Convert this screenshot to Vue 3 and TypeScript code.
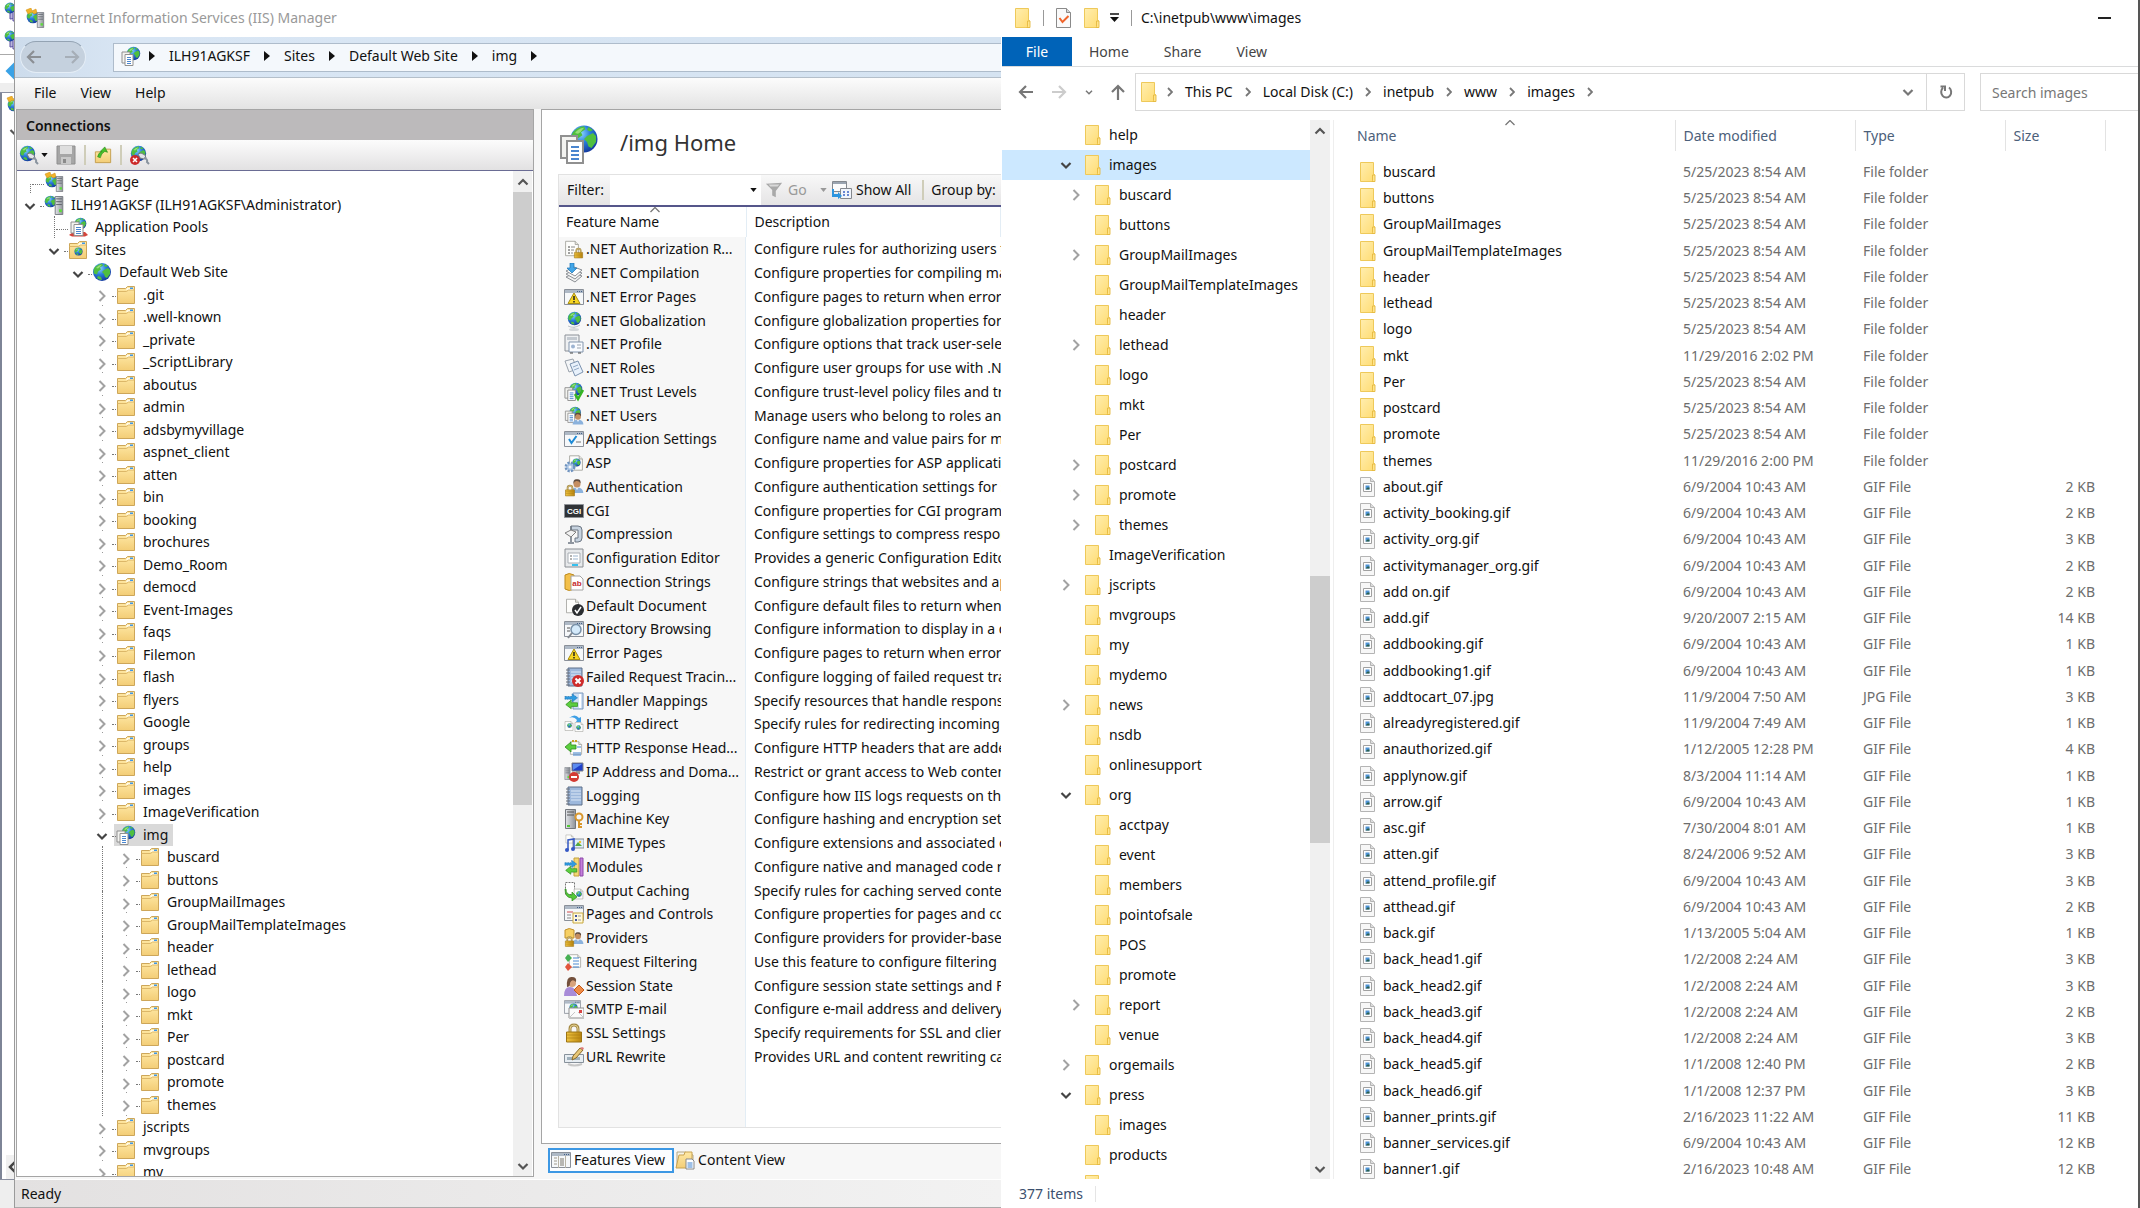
<script setup lang="ts">
interface TreeNode {
  label: string
  icon: string
  depth: number
  toggle: 'open' | 'closed' | 'none'
  selected?: boolean
}

const closed = (label: string, depth: number): TreeNode => ({ label, icon: 'folder', depth, toggle: 'closed' })

const siteFoldersBefore = ['.git', '.well-known', '_private', '_ScriptLibrary', 'aboutus', 'admin', 'adsbymyvillage', 'aspnet_client', 'atten', 'bin', 'booking', 'brochures', 'Demo_Room', 'democd', 'Event-Images', 'faqs', 'Filemon', 'flash', 'flyers', 'Google', 'groups', 'help', 'images', 'ImageVerification']
const imgFolders = ['buscard', 'buttons', 'GroupMailImages', 'GroupMailTemplateImages', 'header', 'lethead', 'logo', 'mkt', 'Per', 'postcard', 'promote', 'themes']
const siteFoldersAfter = ['jscripts', 'mvgroups', 'my']

const connections: TreeNode[] = [
  { label: 'Start Page', icon: 'start', depth: 0, toggle: 'none' },
  { label: 'ILH91AGKSF (ILH91AGKSF\\Administrator)', icon: 'server', depth: 0, toggle: 'open' },
  { label: 'Application Pools', icon: 'pools', depth: 1, toggle: 'none' },
  { label: 'Sites', icon: 'sites', depth: 1, toggle: 'open' },
  { label: 'Default Web Site', icon: 'globe', depth: 2, toggle: 'open' },
  ...siteFoldersBefore.map((n) => closed(n, 3)),
  { label: 'img', icon: 'app', depth: 3, toggle: 'open', selected: true },
  ...imgFolders.map((n) => closed(n, 4)),
  ...siteFoldersAfter.map((n) => closed(n, 3)),
]

const iisPath = ['ILH91AGKSF', 'Sites', 'Default Web Site', 'img']
const iisMenu = ['File', 'View', 'Help']

const features: [string, string, string][] = [
  ['authrules', '.NET Authorization R...', 'Configure rules for authorizing users to access Web sites'],
  ['compile', '.NET Compilation', 'Configure properties for compiling managed code'],
  ['error', '.NET Error Pages', 'Configure pages to return when errors occur'],
  ['global', '.NET Globalization', 'Configure globalization properties for managed code'],
  ['profile', '.NET Profile', 'Configure options that track user-selected preferences'],
  ['roles', '.NET Roles', 'Configure user groups for use with .NET Users'],
  ['trust', '.NET Trust Levels', 'Configure trust-level policy files and trust levels'],
  ['users', '.NET Users', 'Manage users who belong to roles and use the site'],
  ['appset', 'Application Settings', 'Configure name and value pairs for managed code'],
  ['asp', 'ASP', 'Configure properties for ASP applications'],
  ['authn', 'Authentication', 'Configure authentication settings for sites'],
  ['cgi', 'CGI', 'Configure properties for CGI programs'],
  ['compress', 'Compression', 'Configure settings to compress responses'],
  ['config', 'Configuration Editor', 'Provides a generic Configuration Editor'],
  ['connstr', 'Connection Strings', 'Configure strings that websites and applications use'],
  ['defdoc', 'Default Document', 'Configure default files to return when clients ask'],
  ['browse', 'Directory Browsing', 'Configure information to display in a directory listing'],
  ['error', 'Error Pages', 'Configure pages to return when errors occur'],
  ['failed', 'Failed Request Tracin...', 'Configure logging of failed request traces'],
  ['handler', 'Handler Mappings', 'Specify resources that handle responses'],
  ['redirect', 'HTTP Redirect', 'Specify rules for redirecting incoming requests'],
  ['response', 'HTTP Response Head...', 'Configure HTTP headers that are added to responses'],
  ['ip', 'IP Address and Doma...', 'Restrict or grant access to Web content'],
  ['logging', 'Logging', 'Configure how IIS logs requests on the Web server'],
  ['key', 'Machine Key', 'Configure hashing and encryption settings'],
  ['mime', 'MIME Types', 'Configure extensions and associated content types'],
  ['modules', 'Modules', 'Configure native and managed code modules'],
  ['output', 'Output Caching', 'Specify rules for caching served content'],
  ['pages', 'Pages and Controls', 'Configure properties for pages and controls'],
  ['providers', 'Providers', 'Configure providers for provider-based features'],
  ['reqfilter', 'Request Filtering', 'Use this feature to configure filtering rules'],
  ['session', 'Session State', 'Configure session state settings and Forms cookies'],
  ['smtp', 'SMTP E-mail', 'Configure e-mail address and delivery options'],
  ['ssl', 'SSL Settings', 'Specify requirements for SSL and client certificates'],
  ['rewrite', 'URL Rewrite', 'Provides URL and content rewriting capabilities'],
]

// Short captions that sit inside a feature's icon
const captions: Record<string, { text: string; x: number; y: number; fill: string }> = {
  cgi: { text: 'CGI', x: 10, y: 13, fill: '#fff' },
  connstr: { text: 'ab', x: 13, y: 14, fill: '#c62b2b' },
}

type NavRow = [string, number, '' | 'open' | 'closed']
const navRows: NavRow[] = [
  ['help', 0, ''], ['images', 0, 'open'], ['buscard', 1, 'closed'], ['buttons', 1, ''], ['GroupMailImages', 1, 'closed'],
  ['GroupMailTemplateImages', 1, ''], ['header', 1, ''], ['lethead', 1, 'closed'], ['logo', 1, ''], ['mkt', 1, ''], ['Per', 1, ''],
  ['postcard', 1, 'closed'], ['promote', 1, 'closed'], ['themes', 1, 'closed'], ['ImageVerification', 0, ''], ['jscripts', 0, 'closed'],
  ['mvgroups', 0, ''], ['my', 0, ''], ['mydemo', 0, ''], ['news', 0, 'closed'], ['nsdb', 0, ''], ['onlinesupport', 0, ''],
  ['org', 0, 'open'], ['acctpay', 1, ''], ['event', 1, ''], ['members', 1, ''], ['pointofsale', 1, ''], ['POS', 1, ''],
  ['promote', 1, ''], ['report', 1, 'closed'], ['venue', 1, ''], ['orgemails', 0, 'closed'], ['press', 0, 'open'],
  ['images', 1, ''], ['products', 0, ''], ['', 0, ''],
]

const explorerTabs = ['Home', 'Share', 'View']
const explorerPath = ['This PC', 'Local Disk (C:)', 'inetpub', 'www', 'images']

const dir = 'File folder'
const gif = 'GIF File'
const files: [string, string, string, string][] = [
  ['buscard', '5/25/2023 8:54 AM', dir, ''], ['buttons', '5/25/2023 8:54 AM', dir, ''],
  ['GroupMailImages', '5/25/2023 8:54 AM', dir, ''], ['GroupMailTemplateImages', '5/25/2023 8:54 AM', dir, ''],
  ['header', '5/25/2023 8:54 AM', dir, ''], ['lethead', '5/25/2023 8:54 AM', dir, ''],
  ['logo', '5/25/2023 8:54 AM', dir, ''], ['mkt', '11/29/2016 2:02 PM', dir, ''],
  ['Per', '5/25/2023 8:54 AM', dir, ''], ['postcard', '5/25/2023 8:54 AM', dir, ''],
  ['promote', '5/25/2023 8:54 AM', dir, ''], ['themes', '11/29/2016 2:00 PM', dir, ''],
  ['about.gif', '6/9/2004 10:43 AM', gif, '2 KB'], ['activity_booking.gif', '6/9/2004 10:43 AM', gif, '2 KB'],
  ['activity_org.gif', '6/9/2004 10:43 AM', gif, '3 KB'], ['activitymanager_org.gif', '6/9/2004 10:43 AM', gif, '2 KB'],
  ['add on.gif', '6/9/2004 10:43 AM', gif, '2 KB'], ['add.gif', '9/20/2007 2:15 AM', gif, '14 KB'],
  ['addbooking.gif', '6/9/2004 10:43 AM', gif, '1 KB'], ['addbooking1.gif', '6/9/2004 10:43 AM', gif, '1 KB'],
  ['addtocart_07.jpg', '11/9/2004 7:50 AM', 'JPG File', '3 KB'], ['alreadyregistered.gif', '11/9/2004 7:49 AM', gif, '1 KB'],
  ['anauthorized.gif', '1/12/2005 12:28 PM', gif, '4 KB'], ['applynow.gif', '8/3/2004 11:14 AM', gif, '1 KB'],
  ['arrow.gif', '6/9/2004 10:43 AM', gif, '1 KB'], ['asc.gif', '7/30/2004 8:01 AM', gif, '1 KB'],
  ['atten.gif', '8/24/2006 9:52 AM', gif, '3 KB'], ['attend_profile.gif', '6/9/2004 10:43 AM', gif, '3 KB'],
  ['atthead.gif', '6/9/2004 10:43 AM', gif, '2 KB'], ['back.gif', '1/13/2005 5:04 AM', gif, '1 KB'],
  ['back_head1.gif', '1/2/2008 2:24 AM', gif, '3 KB'], ['back_head2.gif', '1/2/2008 2:24 AM', gif, '3 KB'],
  ['back_head3.gif', '1/2/2008 2:24 AM', gif, '2 KB'], ['back_head4.gif', '1/2/2008 2:24 AM', gif, '3 KB'],
  ['back_head5.gif', '1/1/2008 12:40 PM', gif, '2 KB'], ['back_head6.gif', '1/1/2008 12:37 PM', gif, '3 KB'],
  ['banner_prints.gif', '2/16/2023 11:22 AM', gif, '11 KB'], ['banner_services.gif', '6/9/2004 10:43 AM', gif, '12 KB'],
  ['banner1.gif', '2/16/2023 10:48 AM', gif, '12 KB'],
]
</script>

<template>
  <svg class="sprite" aria-hidden="true">
    <defs>
      <radialGradient id="g-sea" cx="38%" cy="30%" r="75%"><stop offset="0" stop-color="#8fd8ff" /><stop offset=".45" stop-color="#2a7fdb" /><stop offset="1" stop-color="#12359a" /></radialGradient>
      <linearGradient id="g-folder" x1="0" y1="0" x2="0" y2="1"><stop offset="0" stop-color="#ffe9a6" /><stop offset="1" stop-color="#f3cd76" /></linearGradient>
      <linearGradient id="g-xfolder" x1="0" y1="0" x2="1" y2="1"><stop offset="0" stop-color="#ffeeb0" /><stop offset="1" stop-color="#ffdc72" /></linearGradient>
      <linearGradient id="g-lock" x1="0" y1="0" x2="1" y2="0"><stop offset="0" stop-color="#f0c440" /><stop offset="1" stop-color="#b9850f" /></linearGradient>
      <linearGradient id="g-steel" x1="0" y1="0" x2="1" y2="0"><stop offset="0" stop-color="#e4e6ea" /><stop offset="1" stop-color="#8e9299" /></linearGradient>
    </defs>

    <symbol id="i-globe" viewBox="0 0 20 20">
      <circle cx="10" cy="10" r="9" fill="url(#g-sea)" />
      <path d="M3 5q3-3 7-3.500l1 2-3 2 1 2-3 2-1 3-3-1q-1-4 1-6.500zM12 8l4-2 2 2v4l-3 4-2-1-1-3-2-2zM6 14l3 1 1 3q-3 0-5-2zM13 2l3 2-2 1-2-1z" fill="#4fbf3f" />
      <path d="M4 6q2-3 6-3.500-2 3-4 4z" fill="#c7f2a0" opacity=".6" />
    </symbol>
    <symbol id="i-page" viewBox="0 0 20 20">
      <path d="M2 1h12l4 4v14H2z" fill="#fdfdfb" stroke="#9a9a94" />
      <path d="M14 1v4h4" fill="#e6e6e0" stroke="#9a9a94" />
    </symbol>
    <symbol id="i-win" viewBox="0 0 20 20">
      <path d="M.5 2.500h19v15H.5z" fill="#f6f8fa" stroke="#8a9099" />
      <path d="M1 3h18v3H1z" fill="#aeb9c6" />
      <path d="M13 4.500h1M15 4.500h1M17 4.500h1" stroke="#42608a" />
    </symbol>
    <symbol id="i-person" viewBox="0 0 20 20">
      <path d="M1 20q0-8 9-8t9 8z" fill="#8bb2dd" />
      <path d="M7 11l3 5 3-5z" fill="#e9f0f8" />
      <circle cx="10" cy="7" r="5" fill="#c58e60" />
      <path d="M5 7q-1-7 5-6.500 6-.5 5 6-2-4-6-3.500-3 0-4 4z" fill="#5e4a3c" />
    </symbol>
    <symbol id="i-ssl" viewBox="0 0 20 20">
      <path d="M6 9V6q0-4 4-4t4 4v3" fill="none" stroke="#a58a45" stroke-width="3" />
      <path d="M6 9V6q0-4 4-4t4 4v3" fill="none" stroke="#e3cf8e" />
      <path d="M2.500 9h15v10h-15z" fill="url(#g-lock)" stroke="#9c7414" />
      <path d="M3 12h14M3 15h14" stroke="#a87b13" opacity=".6" />
    </symbol>
    <symbol id="i-tower" viewBox="0 0 10 20">
      <path d="M1 .500h8v19H1z" fill="url(#g-steel)" stroke="#777b82" />
      <path d="M2 3h6M2 6h6M2 9h6" stroke="#5d6269" />
      <path d="M5 14h3v3H5z" fill="#5edb3c" />
    </symbol>
    <symbol id="i-notebook" viewBox="0 0 20 20">
      <path d="M4 1h14v18H4z" fill="#9db8dc" stroke="#5d6e88" />
      <path d="M7 5h10M7 8h10M7 11h10M7 14h10" stroke="#dce8f6" />
      <path d="M2 3h4M2 6h4M2 9h4M2 12h4M2 15h4M2 18h4" stroke="#6a717c" />
    </symbol>
    <symbol id="i-arrows" viewBox="0 0 20 20">
      <path d="M1 5h8V2l6 4.500L9 11V8H1z" fill="#2f9be0" stroke="#1d6aa8" stroke-width=".7" stroke-dasharray="2 1" />
      <path d="M15 12H8V9l-6 5 6 4.500V16h7z" fill="#5ccf3e" stroke="#2e8a1e" stroke-width=".8" />
    </symbol>

    <symbol id="i-start" viewBox="0 0 20 20">
      <use href="#i-globe" x="1" y="2" width="14" height="14" />
      <path d="M1 2l5-2 1 3 4-2 1 4-3 1-2-2-4 2z" fill="#f2b32b" stroke="#d18d10" stroke-width=".5" />
      <use href="#i-tower" x="11" y="4" width="9" height="16" />
    </symbol>
    <symbol id="i-server" viewBox="0 0 20 20">
      <use href="#i-globe" x="0" y="0" width="13" height="13" />
      <use href="#i-tower" x="10" y="1" width="10" height="19" />
    </symbol>
    <symbol id="i-stack" viewBox="0 0 20 20">
      <path d="M6 7l8-1v10l-8 1z" fill="#b9b6dc" stroke="#5a4fa0" />
      <path d="M9 9l8-1v10l-8 1z" fill="#dcd9f2" stroke="#5a4fa0" />
      <use href="#i-globe" x="0" y="0" width="12" height="12" />
    </symbol>
    <symbol id="i-app" viewBox="0 0 20 20">
      <use href="#i-globe" x="5" y="0" width="15" height="15" />
      <path d="M1 6h8v11H1z" fill="#f3f3f0" stroke="#909090" />
      <path d="M4 8.500h8v11H4z" fill="#fff" stroke="#909090" />
      <path d="M6 11.500h4M6 13.500h4M6 15.500h4M6 17.500h4" stroke="#4a86cf" />
    </symbol>
    <symbol id="i-pools" viewBox="0 0 20 20">
      <use href="#i-globe" x="6" y="0" width="13" height="13" />
      <path d="M1 18l4-3h12l3 3-3 1.500H4z" fill="#d5453b" />
      <path d="M3 5h8v11H3z" fill="#f3f3f0" stroke="#909090" />
      <path d="M6 7.500h9v11H6z" fill="#fff" stroke="#909090" />
      <path d="M8 10.500h5M8 12.500h5M8 14.500h5M8 16.500h5" stroke="#4a86cf" />
    </symbol>
    <symbol id="i-folder" viewBox="0 0 20 20">
      <path d="M1.500 3.500h8l2-2h7v17h-17z" fill="url(#g-folder)" stroke="#cda659" />
      <path d="M11 3h6v2H10z" fill="#fffbe8" /><path d="M14 2.500h3v1.500h-3z" fill="#3f97e6" />
      <path d="M1.500 6.500h9l2-1.500h6" fill="none" stroke="#dcb768" />
    </symbol>
    <symbol id="i-sites" viewBox="0 0 20 20">
      <use href="#i-folder" width="20" height="20" /><use href="#i-globe" x="6" y="7" width="9" height="9" />
    </symbol>
    <symbol id="i-xfolder" viewBox="0 0 16 20">
      <path d="M.5 .500h13v12h1v7H.5z" fill="url(#g-xfolder)" stroke="#eec95a" />
      <path d="M12.500 18.500v-5.500h2.500v6.500h-3z" fill="#ffe48c" stroke="#e5b93f" stroke-width=".9" />
    </symbol>
    <symbol id="i-image" viewBox="0 0 16 20">
      <path d="M.5 .500h10l4 4v15H.5z" fill="#f7f7f7" stroke="#b4b4b4" />
      <path d="M10.500 .500v4h4" fill="#ddd" stroke="#b4b4b4" />
      <path d="M3.500 6.500h8v8h-8z" fill="#fff" stroke="#a0a0a0" />
      <path d="M5.500 8.500h4v4h-4z" fill="#4d93d6" /><path d="M5.500 12.500l2-2h2v2z" fill="#2c5f4c" />
    </symbol>
    <symbol id="i-plug" viewBox="0 0 20 20">
      <use href="#i-globe" width="17" height="17" />
      <path d="M8 9l3-1 4 2 1 3-2 1-4-1z" fill="#e1e4e8" stroke="#757b83" /><path d="M14 13q4 1 3 4l2 2" fill="none" stroke="#89939e" stroke-width="2" />
    </symbol>
    <symbol id="i-unplug" viewBox="0 0 20 20">
      <use href="#i-plug" width="20" height="20" />
      <circle cx="5" cy="15" r="5" fill="#cc2a2a" /><path d="M3 13l4 4M7 13l-4 4" stroke="#fff" stroke-width="1.500" />
    </symbol>
    <symbol id="i-save" viewBox="0 0 20 20">
      <path d="M1 1h18v18H1z" fill="#a6a6a6" stroke="#8e8e8e" /><path d="M4 1h12v8H4z" fill="#dedede" /><path d="M5 12h10v7H5z" fill="#c9c9c9" /><path d="M7 14h3v4H7z" fill="#8a8a8a" />
    </symbol>
    <symbol id="i-upfolder" viewBox="0 0 20 20">
      <path d="M1.500 6.500h9l2-3h6v15h-17z" fill="url(#g-folder)" stroke="#c19b4b" />
      <path d="M4 12q1-5 5-6H7l5-5 3 6-3-1q-4 2-5 7z" fill="#46c02b" stroke="#2c8a19" stroke-width=".7" />
    </symbol>
    <symbol id="i-funnel" viewBox="0 0 20 20">
      <path d="M1 3l18-1-7 9v7l-4-2v-6z" fill="#a9a9a9" /><path d="M4 4h12l-2 2H6z" fill="#d9d9d9" />
    </symbol>
    <symbol id="i-showall" viewBox="0 0 20 20">
      <path d="M.5 1.500h14v10H.5z" fill="#fbfbfb" stroke="#84888e" /><path d="M1 2h13v2H1z" fill="#9aa4b0" />
      <path d="M8.500 8.500h11v10h-11z" fill="#f0f4fb" stroke="#84888e" /><path d="M11 12h2M15 12h2M11 15h2M15 15h2" stroke="#3b62c4" stroke-width="1.500" />
      <path d="M2 9v5h4v-2l4 4-4 3v-2H0V9z" fill="#2d95df" />
    </symbol>
    <symbol id="i-featview" viewBox="0 0 20 20">
      <use href="#i-win" width="20" height="20" /><path d="M3 8h3M3 11h3M3 14h3" stroke="#a09a8c" /><path d="M7.500 6v12M14.500 6v12" stroke="#b9b4a6" /><path d="M9 9h4M9 11h4M9 13h4M9 15h4" stroke="#7b776d" />
    </symbol>
    <symbol id="i-contview" viewBox="0 0 20 20">
      <path d="M2 2h8l8 3v11H2z" fill="#f7f4ea" stroke="#b4a784" /><path d="M1 18L4 5h5l1-3h7v14l-5 2z" fill="url(#g-folder)" stroke="#c8a24f" />
      <path d="M11 9h6l2 2v8h-8z" fill="#fff" stroke="#888" /><path d="M12.500 13h5M12.500 15h5M12.500 17h5" stroke="#3f82d0" />
    </symbol>

    <symbol id="i-authrules" viewBox="0 0 20 20">
      <use href="#i-page" width="16" height="19" /><path d="M4 8h2M4 11h2M4 14h2" stroke="#444" /><path d="M7 8h4M7 11h3M7 14h2" stroke="#888" />
      <use href="#i-ssl" x="9" y="8" width="11" height="12" />
    </symbol>
    <symbol id="i-compile" viewBox="0 0 20 20">
      <path d="M2 14l8-4 8 3-7 6z" fill="#f2f2f2" stroke="#8b8f94" /><path d="M2 11l8-4 8 3-7 6z" fill="#f8f8f8" stroke="#8b8f94" /><path d="M2 8l8-4 8 3-7 6z" fill="#fff" stroke="#8b8f94" />
      <path d="M6 0h4v5h3l-5 5-5-5h3z" fill="#42a6e8" stroke="#1d74b4" stroke-width=".7" />
    </symbol>
    <symbol id="i-error" viewBox="0 0 20 20">
      <use href="#i-win" width="20" height="20" /><path d="M10 6l6 10.500H4z" fill="#f7d624" stroke="#a98e12" /><path d="M10 9v4M10 14v1.500" stroke="#222" stroke-width="1.500" />
    </symbol>
    <symbol id="i-global" viewBox="0 0 20 20">
      <use href="#i-globe" x="3" y="0" width="15" height="15" /><path d="M4 15q6 3 12-1M10 16v2" fill="none" stroke="#bfc4ca" /><ellipse cx="10" cy="18.500" rx="5" ry="1.500" fill="#d4d7da" />
    </symbol>
    <symbol id="i-profile" viewBox="0 0 20 20">
      <path d="M1 1h14v16H1z" fill="#eef0f2" stroke="#8b9097" /><path d="M3 3h10v3H3z" fill="#c3c9d0" /><path d="M5 8h14v10H5z" fill="#fafcff" stroke="#8295ad" />
      <circle cx="9" cy="12.500" r="2" fill="#9db4d2" /><path d="M13 11h4M13 14h4" stroke="#9aa3ae" /><path d="M6 19h3M14 19h3" stroke="#444" />
    </symbol>
    <symbol id="i-roles" viewBox="0 0 20 20">
      <path d="M1 3l8-2 4 10-8 3z" fill="#f3f5f7" stroke="#9aa2ac" /><path d="M6 6l8-3 5 11-8 4z" fill="#e8f1fb" stroke="#7c93b0" /><path d="M9 9l5-2M10 12l5-2" stroke="#8fa7c5" />
    </symbol>
    <symbol id="i-trust" viewBox="0 0 20 20">
      <use href="#i-app" width="19" height="19" /><path d="M11 12l3 5 5-9" fill="none" stroke="#35b522" stroke-width="2.500" />
    </symbol>
    <symbol id="i-users" viewBox="0 0 20 20">
      <use href="#i-app" width="18" height="17" /><use href="#i-person" x="8" y="5" width="12" height="15" />
    </symbol>
    <symbol id="i-appset" viewBox="0 0 20 20">
      <use href="#i-win" width="20" height="20" /><path d="M5 10l2.500 4 5-7" fill="none" stroke="#1e8bd6" stroke-width="2" /><path d="M12 13h5" stroke="#777" />
    </symbol>
    <symbol id="i-asp" viewBox="0 0 20 20">
      <use href="#i-page" x="4" width="16" height="20" /><use href="#i-globe" x="8" y="5" width="9" height="9" />
      <circle cx="6" cy="14" r="4" fill="#c6d8ee" stroke="#6f93bf" stroke-width="3" stroke-dasharray="2 1.200" /><circle cx="6" cy="14" r="3" fill="#a9c4e4" /><circle cx="6" cy="14" r="1.500" fill="#f7f7f7" />
    </symbol>
    <symbol id="i-authn" viewBox="0 0 20 20">
      <use href="#i-person" x="6" y="0" width="14" height="18" /><use href="#i-ssl" x="0" y="7" width="12" height="13" />
    </symbol>
    <symbol id="i-cgi" viewBox="0 0 20 20">
      <path d="M.5 3.500h19v13H.5z" fill="#2f3236" stroke="#8f9398" />
    </symbol>
    <symbol id="i-compress" viewBox="0 0 20 20">
      <path d="M7 2h7q4 0 4 4v8q0 4-4 4h-3v-4h3V6H7z" fill="#c7d3e0" stroke="#6d7783" /><path d="M1 9l6-3 5 2-5 5z" fill="#f3f3f3" stroke="#7d7d7d" /><path d="M7 13v5M4 19h6M7 2v4" stroke="#6d7783" stroke-width="1.500" />
    </symbol>
    <symbol id="i-config" viewBox="0 0 20 20">
      <path d="M1 1h18v18H1z" fill="#e7e9eb" stroke="#8a8e93" /><path d="M4 5h12v10H4z" fill="#fff" stroke="#a8adb3" /><path d="M6 8h2M6 11h2" stroke="#666" /><path d="M9 8h5M9 11h5" stroke="#9bb3cc" /><path d="M8 17h6" stroke="#36c0ee" stroke-width="2" />
    </symbol>
    <symbol id="i-connstr" viewBox="0 0 20 20">
      <path d="M1 3q4-3 9 0v14q-5 3-9 0z" fill="#f3c04a" stroke="#bd8a1c" /><path d="M7 4h9l3 3v11H7z" fill="#fff" stroke="#a4a4a4" />
    </symbol>
    <symbol id="i-defdoc" viewBox="0 0 20 20">
      <use href="#i-page" x="1" width="15" height="20" /><circle cx="14" cy="14" r="6" fill="#2b2d30" /><path d="M11 14l2 3 4-6" fill="none" stroke="#fff" stroke-width="1.500" />
    </symbol>
    <symbol id="i-browse" viewBox="0 0 20 20">
      <use href="#i-win" width="20" height="20" /><path d="M3 9h3M3 12h3" stroke="#555" /><circle cx="12" cy="10.500" r="5" fill="#d4eafb" stroke="#7890a8" stroke-width="1.500" /><path d="M8 14l-4 5" stroke="#80868e" stroke-width="2" />
    </symbol>
    <symbol id="i-failed" viewBox="0 0 20 20">
      <use href="#i-notebook" width="20" height="20" /><circle cx="14" cy="14" r="6" fill="#cf2b2b" /><path d="M11.500 11.500l5 5M16.500 11.500l-5 5" stroke="#fff" stroke-width="2" />
    </symbol>
    <symbol id="i-logging" viewBox="0 0 20 20"><use href="#i-notebook" width="20" height="20" /></symbol>
    <symbol id="i-handler" viewBox="0 0 20 20">
      <path d="M9 2h10v16H9z" fill="#cfe0f4" stroke="#7b98bd" /><path d="M16 3v14" stroke="#fff" stroke-width="2" /><use href="#i-arrows" width="18" height="20" />
    </symbol>
    <symbol id="i-modules" viewBox="0 0 20 20">
      <path d="M10 1h5v18h-5z" fill="#f4d774" stroke="#c3a13c" /><path d="M16 1h3v18h-3z" fill="#c47fdc" stroke="#8d48a8" /><use href="#i-arrows" width="17" height="20" />
    </symbol>
    <symbol id="i-redirect" viewBox="0 0 20 20">
      <use href="#i-page" y="5" width="10" height="14" /><use href="#i-page" x="10" y="6" width="10" height="14" /><use href="#i-globe" x="3" y="9" width="5" height="5" /><use href="#i-globe" x="12" y="11" width="5" height="5" />
      <path d="M5 4q6-5 10 0l2-1v5h-5l1-2q-3-4-8-2z" fill="#3fa0e6" />
    </symbol>
    <symbol id="i-response" viewBox="0 0 20 20">
      <use href="#i-page" x="5" width="14" height="20" /><path d="M8 3h2M11 3h2" stroke="#c9a222" stroke-width="2" /><path d="M13 9h4M9 15h8M9 17h8" stroke="#3f82d0" />
      <path d="M12 7H7V4L1 9l6 5v-3h5z" fill="#5ccf3e" stroke="#2e8a1e" stroke-width=".8" />
    </symbol>
    <symbol id="i-ip" viewBox="0 0 20 20">
      <use href="#i-tower" y="5" width="7" height="13" /><path d="M8 1h11v8H8z" fill="#1f3fc9" stroke="#7d8187" /><path d="M9 2h9l-9 6z" fill="#5b8cf0" /><path d="M12 9h4v3h-4z" fill="#999" />
      <circle cx="10" cy="15" r="5" fill="#d33a33" /><path d="M7 15h6" stroke="#fff" stroke-width="2" />
    </symbol>
    <symbol id="i-key" viewBox="0 0 20 20">
      <path d="M1.500 .500h10v19h-10z" fill="url(#g-steel)" stroke="#74787e" /><path d="M3 3h7M3 6h7" stroke="#555" /><path d="M3 16h3v2H3z" fill="#54c837" />
      <circle cx="15" cy="8" r="3.500" fill="none" stroke="#d9972c" stroke-width="2" /><path d="M15 11v8M15 15h3M15 18h3" stroke="#d9972c" stroke-width="2" />
    </symbol>
    <symbol id="i-mime" viewBox="0 0 20 20">
      <use href="#i-page" x="1" width="9" height="12" /><path d="M9 6h11v9H9z" fill="#dfeefc" stroke="#8a9097" /><path d="M11 13l3-4 4 4z" fill="#55a93e" /><circle cx="16" cy="9" r="1.200" fill="#f2c32c" />
      <path d="M4 17V7l6-1v10" fill="none" stroke="#3558c4" stroke-width="1.500" /><circle cx="3" cy="17" r="2" fill="#3558c4" /><circle cx="9" cy="16" r="2" fill="#3558c4" />
    </symbol>
    <symbol id="i-output" viewBox="0 0 20 20">
      <path d="M1.500 1.500h9v12h-9z" fill="#fff" stroke="#777" stroke-dasharray="2 1" /><use href="#i-page" x="9" y="6" width="11" height="14" /><use href="#i-globe" x="12" y="10" width="6" height="6" />
      <path d="M2 8q0 6 6 6v-3l5 5-5 4v-3q-7 0-7-9z" fill="#55c93a" stroke="#2d8a1c" stroke-width=".7" />
    </symbol>
    <symbol id="i-pages" viewBox="0 0 20 20">
      <use href="#i-win" y="-1" width="20" height="20" /><path d="M3 8h6" stroke="#d14a4a" /><path d="M3 11h4M3 14h4" stroke="#888" />
      <path d="M9 9h10v10H9z" fill="#fff9dc" stroke="#c9a83c" /><path d="M11 12h2M11 16h2" stroke="#4456a0" stroke-width="2" /><path d="M14 12h3M14 16h3" stroke="#999" />
    </symbol>
    <symbol id="i-providers" viewBox="0 0 20 20">
      <path d="M1 2q4-3 9 0v8H1z" fill="#f6cf63" stroke="#c2922b" /><use href="#i-person" x="8" y="2" width="12" height="16" /><use href="#i-ssl" y="7" width="11" height="13" />
    </symbol>
    <symbol id="i-reqfilter" viewBox="0 0 20 20">
      <use href="#i-page" x="4" width="14" height="18" /><path d="M9 6h6M9 9h6M9 12h6M9 15h6" stroke="#4c8ad4" /><path d="M4 2l4 4-4 4-3-4z" fill="#45b053" /><path d="M4 11l4 4-4 4-3-4z" fill="#e2553c" />
    </symbol>
    <symbol id="i-session" viewBox="0 0 20 20">
      <path d="M0 20q0-9 6-9t7 9z" fill="#a88bd8" /><circle cx="8" cy="7" r="4" fill="#d8a27b" /><path d="M3 11Q2 0 8 1q5 0 4 5-4-4-6 1 0 4-3 4z" fill="#73503c" /><path d="M15 9l5 5-5 5-5-5z" fill="#ef8a45" stroke="#c25a1a" />
    </symbol>
    <symbol id="i-smtp" viewBox="0 0 20 20">
      <use href="#i-win" y="-2" width="17" height="20" /><use href="#i-globe" x="5" y="4" width="9" height="9" /><path d="M5 9h15v10H5z" fill="#fbfbfb" stroke="#8f8f8f" /><path d="M5 19l6-6M20 19l-6-6" stroke="#c6c6c6" /><path d="M15 11h3v3h-3z" fill="#d94545" />
    </symbol>
    <symbol id="i-rewrite" viewBox="0 0 20 20">
      <path d="M.5 7.500h19v8H.5z" fill="#e7edf2" stroke="#87919b" /><path d="M3 10h13v3H3z" fill="#9fb0bc" /><path d="M4 17q6 3 14 0" fill="none" stroke="#c8c8c8" stroke-width="2" />
      <path d="M8 13l1-4 7-8 3 2-7 8z" fill="#e8c777" stroke="#8a6b2a" /><path d="M16 1l3 2 1-2-2-1z" fill="#e07b7b" />
    </symbol>

    <symbol id="c-down" viewBox="0 0 12 12"><path d="M1.500 4L6 8.500 10.500 4" fill="none" stroke="currentColor" stroke-width="2.200" /></symbol>
    <symbol id="c-up" viewBox="0 0 12 12"><path d="M1.500 8.500L6 4l4.500 4.500" fill="none" stroke="currentColor" stroke-width="2.200" /></symbol>
    <symbol id="c-right" viewBox="0 0 12 12"><path d="M3.500 1L8.500 6l-5 5" fill="none" stroke="currentColor" stroke-width="2" /></symbol>
    <symbol id="c-left" viewBox="0 0 12 12"><path d="M9 1L4 6l5 5" fill="none" stroke="currentColor" stroke-width="2.500" /></symbol>
    <symbol id="c-peak" viewBox="0 0 12 12"><path d="M1.500 8L6 3.500 10.500 8" fill="none" stroke="currentColor" stroke-width="1.300" /></symbol>
    <symbol id="c-crumb" viewBox="0 0 6 10"><path d="M1 1l4 4-4 4" fill="none" stroke="currentColor" stroke-width="1.800" /></symbol>
    <symbol id="c-tri" viewBox="0 0 6 10"><path d="M0 0l6 5-6 5z" fill="currentColor" /></symbol>
    <symbol id="c-tridown" viewBox="0 0 8 5"><path d="M0 0h8L4 5z" fill="currentColor" /></symbol>
    <symbol id="c-back" viewBox="0 0 16 16"><path d="M15 8H2M8 2L2 8l6 6" fill="none" stroke="currentColor" stroke-width="2.200" /></symbol>
    <symbol id="c-fwd" viewBox="0 0 16 16"><path d="M1 8h13M8 2l6 6-6 6" fill="none" stroke="currentColor" stroke-width="2.200" /></symbol>
    <symbol id="c-top" viewBox="0 0 16 16"><path d="M8 16V2M2 8l6-6 6 6" fill="none" stroke="currentColor" stroke-width="2.200" /></symbol>
  </svg>

  <div class="desktop">
    <div class="behind" aria-hidden="true">
      <div class="behind-top">
        <svg class="ic"><use href="#i-stack" /></svg>
        <svg class="ic"><use href="#i-stack" /></svg>
      </div>
      <div class="behind-mid"><span class="diamond"></span></div>
      <div class="behind-body">
        <svg class="ic"><use href="#i-start" /></svg>
        <svg class="ch"><use href="#c-down" /></svg>
        <div class="behind-foot"><svg class="ch"><use href="#c-left" /></svg></div>
      </div>
      <div class="behind-end"></div>
    </div>

    <section class="iis" aria-label="Internet Information Services (IIS) Manager">
      <header class="iis-title"><svg class="ic"><use href="#i-start" /></svg><span>Internet Information Services (IIS) Manager</span></header>
      <div class="iis-nav">
        <div class="capsule">
          <button type="button" aria-label="Back"><svg class="a16"><use href="#c-back" /></svg></button>
          <button type="button" aria-label="Forward" class="dim"><svg class="a16"><use href="#c-fwd" /></svg></button>
        </div>
        <nav class="iis-addr" aria-label="Address">
          <svg class="ic"><use href="#i-app" /></svg>
          <svg class="tri"><use href="#c-tri" /></svg>
          <template v-for="p in iisPath" :key="p">
            <button type="button">{{ p }}</button>
            <svg class="tri"><use href="#c-tri" /></svg>
          </template>
        </nav>
      </div>
      <nav class="iis-menu" aria-label="Menu"><button v-for="m in iisMenu" :key="m" type="button">{{ m }}</button></nav>

      <div class="iis-body">
        <section class="conn">
          <h2>Connections</h2>
          <div class="conn-tools">
            <button type="button" aria-label="Connect"><svg class="ic"><use href="#i-plug" /></svg><svg class="td"><use href="#c-tridown" /></svg></button>
            <button type="button" aria-label="Save"><svg class="ic"><use href="#i-save" /></svg></button>
            <i class="bar"></i>
            <button type="button" aria-label="Up"><svg class="ic18"><use href="#i-upfolder" /></svg></button>
            <i class="bar"></i>
            <button type="button" aria-label="Disconnect"><svg class="ic"><use href="#i-unplug" /></svg></button>
          </div>
          <div class="conn-view">
            <ul class="tree">
              <li v-for="(n, i) in connections" :key="i" :class="n.toggle">
                <span v-for="d in n.depth" :key="d" class="guide" :class="{ line: d === 4 }"></span>
                <button v-if="n.toggle !== 'none'" type="button" class="tog" :aria-label="'Toggle ' + n.label">
                  <svg class="ch"><use :href="n.toggle === 'open' ? '#c-down' : '#c-right'" /></svg>
                </button>
                <span v-else class="tog leaf" :class="{ first: i === 0 }"></span>
                <span class="node" :class="{ selected: n.selected }"><svg class="ic"><use :href="'#i-' + n.icon" /></svg>{{ n.label }}</span>
              </li>
            </ul>
            <div class="sb">
              <button type="button" aria-label="Scroll up"><svg class="ch"><use href="#c-up" /></svg></button>
              <div class="thumb tall"></div><div class="space short"></div>
              <button type="button" aria-label="Scroll down"><svg class="ch"><use href="#c-down" /></svg></button>
            </div>
          </div>
        </section>

        <section class="home">
          <div class="home-main">
            <div class="home-head"><svg class="big"><use href="#i-app" /></svg><h1>/img Home</h1></div>
            <div class="featbox">
              <div class="filter">
                <label for="filter">Filter:</label>
                <div class="combo"><input id="filter" type="text" /><button type="button" aria-label="Filter history"><svg class="td"><use href="#c-tridown" /></svg></button></div>
                <button type="button" class="go" disabled><svg class="ic18"><use href="#i-funnel" /></svg>Go<svg class="td"><use href="#c-tridown" /></svg></button>
                <button type="button" class="showall"><svg class="ic"><use href="#i-showall" /></svg>Show All</button>
                <i class="bar"></i>
                <span class="groupby">Group by:</span>
              </div>
              <div class="featlist">
                <table>
                  <colgroup><col class="c-name" /><col /></colgroup>
                  <thead><tr><th>Feature Name<svg class="sort"><use href="#c-peak" /></svg></th><th>Description</th></tr></thead>
                  <tbody>
                    <tr v-for="(f, i) in features" :key="i">
                      <td>
                        <div class="feat">
                          <svg class="ic" viewBox="0 0 20 20">
                            <use :href="'#i-' + f[0]" width="20" height="20" />
                            <text v-if="captions[f[0]]" class="cap" :x="captions[f[0]].x" :y="captions[f[0]].y" :fill="captions[f[0]].fill">{{ captions[f[0]].text }}</text>
                          </svg>{{ f[1] }}
                        </div>
                      </td>
                      <td>{{ f[2] }}</td>
                    </tr>
                  </tbody>
                </table>
              </div>
            </div>
          </div>
          <div class="views">
            <button type="button" class="active"><svg class="ic"><use href="#i-featview" /></svg>Features View</button>
            <button type="button"><svg class="ic"><use href="#i-contview" /></svg>Content View</button>
          </div>
        </section>
      </div>
      <footer class="iis-status">Ready</footer>
    </section>

    <section class="exp" aria-label="File Explorer">
      <header class="exp-title">
        <svg class="xf"><use href="#i-xfolder" /></svg>
        <i class="vbar"></i>
        <button type="button" aria-label="Properties">
          <svg class="xf" viewBox="0 0 16 20"><path d="M.5 .500h10l4 4v15H.5z" fill="#fafafa" stroke="#8a8a8a" /><path d="M10.500 .500v4h4" fill="#d5d5d5" stroke="#8a8a8a" /><path d="M3.500 10l3 4 6-6" fill="none" stroke="#f0642a" stroke-width="2" /></svg>
        </button>
        <button type="button" aria-label="New folder"><svg class="xf"><use href="#i-xfolder" /></svg></button>
        <button type="button" aria-label="Customize" class="custom"><svg viewBox="0 0 9 9"><path d="M0 1h9" stroke="#111" stroke-width="1.500" /><path d="M0 4h9L4.500 9z" fill="#111" /></svg></button>
        <i class="vbar"></i>
        <span class="path">C:\inetpub\www\images</span>
        <button type="button" aria-label="Minimize" class="min"></button>
      </header>
      <nav class="ribbon" aria-label="Ribbon">
        <button type="button" class="file">File</button>
        <button v-for="t in explorerTabs" :key="t" type="button">{{ t }}</button>
      </nav>
      <div class="exp-nav">
        <div class="exp-arrows">
          <button type="button" aria-label="Back"><svg class="a16"><use href="#c-back" /></svg></button>
          <button type="button" aria-label="Forward" class="faint"><svg class="a16"><use href="#c-fwd" /></svg></button>
          <button type="button" aria-label="Recent"><svg class="ch8"><use href="#c-down" /></svg></button>
          <button type="button" aria-label="Up"><svg class="a16"><use href="#c-top" /></svg></button>
        </div>
        <nav class="exp-addr" aria-label="Path">
          <svg class="xf"><use href="#i-xfolder" /></svg>
          <svg class="crumb"><use href="#c-crumb" /></svg>
          <template v-for="p in explorerPath" :key="p">
            <button type="button">{{ p }}</button>
            <svg class="crumb"><use href="#c-crumb" /></svg>
          </template>
          <button type="button" class="drop" aria-label="Previous locations"><svg class="ch"><use href="#c-down" /></svg></button>
          <button type="button" class="refresh" aria-label="Refresh"><svg class="a16" viewBox="0 0 16 16"><path d="M11 3.500A5 5.500 0 1 1 5 3.800M2.500 2.500h4.500v4.500" fill="none" stroke="currentColor" stroke-width="2" /></svg></button>
        </nav>
        <input class="search" type="text" placeholder="Search images" aria-label="Search images" />
      </div>
      <div class="exp-body">
        <div class="navpane">
          <ul>
            <li v-for="(r, i) in navRows" :key="i" :class="[r[1] ? 'deep' : 'top', { sel: i === 1 }]">
              <span class="ntog" :class="r[2]"><button v-if="r[2]" type="button" :aria-label="'Toggle ' + r[0]"><svg class="ch"><use :href="r[2] === 'open' ? '#c-down' : '#c-right'" /></svg></button></span>
              <svg class="xf"><use href="#i-xfolder" /></svg><span>{{ r[0] }}</span>
            </li>
          </ul>
          <div class="sb">
            <button type="button" aria-label="Scroll up"><svg class="ch"><use href="#c-up" /></svg></button>
            <div class="space above"></div><div class="thumb mid"></div><div class="space below"></div>
            <button type="button" aria-label="Scroll down"><svg class="ch"><use href="#c-down" /></svg></button>
          </div>
        </div>
        <div class="filepane">
          <table>
            <colgroup><col class="f-name" /><col class="f-date" /><col class="f-type" /><col class="f-size" /><col /></colgroup>
            <thead><tr><th>Name<svg class="sort"><use href="#c-peak" /></svg></th><th>Date modified</th><th>Type</th><th>Size</th><th></th></tr></thead>
            <tbody>
              <tr v-for="f in files" :key="f[0]">
                <td><div class="fname"><svg class="xf"><use :href="f[2] === dir ? '#i-xfolder' : '#i-image'" /></svg>{{ f[0] }}</div></td>
                <td>{{ f[1] }}</td><td>{{ f[2] }}</td><td>{{ f[3] }}</td><td></td>
              </tr>
            </tbody>
          </table>
        </div>
      </div>
      <footer class="exp-status"><span>377 items</span><i class="vbar pale"></i></footer>
    </section>
  </div>
</template>

<style>
body { background: #fff; }
</style>

<style scoped>
* { box-sizing: border-box; }
.sprite { position: absolute; width: 0; height: 0; }
.desktop {
  display: flex; height: 100vh; overflow: hidden; background: #fff; color: #111;
  font: 14px/20px "Noto Sans", "Open Sans", sans-serif; white-space: nowrap; border-right: 2px solid #555;
}
button, input { font: inherit; color: inherit; border: 0; padding: 0; margin: 0; background: none; outline: none; border-radius: 0; }
button { display: inline-flex; align-items: center; }
h1, h2, ul { margin: 0; padding: 0; font-weight: 400; }
ul { list-style: none; }
svg { flex: none; display: block; }
.ic { width: 20px; height: 20px; }
.ic18 { width: 18px; height: 18px; }
.xf { width: 16px; height: 20px; }
.a16 { width: 16px; height: 16px; }
.ch { width: 12px; height: 12px; }
.ch8 { width: 8px; height: 8px; }
.td { width: 7px; height: 4px; }
.tri { width: 6px; height: 10px; color: #111; }
.crumb { width: 6px; height: 10px; color: #777; }
.cap { font: bold 8px "Liberation Sans", sans-serif; text-anchor: middle; }
.bar { width: 2px; height: 20px; background: #cfcdb9; }
.vbar { width: 1px; height: 16px; background: #999; }

.behind { flex: 0 0 15px; display: flex; flex-direction: column; overflow: hidden; border-right: 1px solid #9a9a9a; }
.behind-top { height: 55px; border-bottom: 1px solid #aaa; padding: 2px 0 0 4px; display: flex; flex-direction: column; gap: 8px; }
.behind-mid { height: 38px; border-bottom: 1px solid #8a8fa0; padding: 10px 0 0 8px; background: linear-gradient(#fff 75%, #eee 75%); }
.diamond { display: block; width: 12px; height: 12px; background: #3aa2e6; transform: rotate(45deg); }
.behind-body { flex: 1; border-left: 2px solid #7d8496; padding: 3px 0 0 4px; display: flex; flex-direction: column; gap: 10px; min-height: 0; }
.behind-body > .ch { margin-left: 3px; color: #555; }
.behind-foot { margin-top: auto; padding: 6px 0; background: #f0f0f0; color: #444; }
.behind-end { height: 29px; border-top: 1px solid #8a8fa0; background: #eee; }

.iis { flex: 986 1 0; min-width: 0; display: flex; flex-direction: column; background: #f7f7f7; overflow: hidden; }
.iis-title { height: 37px; display: flex; align-items: center; gap: 6px; padding: 0 0 2px 10px; background: #fff; color: #999; }
.iis-nav { height: 41px; display: flex; align-items: center; background: linear-gradient(90deg, #cddcec, #d9e6f4 12%, #d5e3f1); border-bottom: 1px solid #b4bfca; }
.capsule { width: 66px; height: 32px; margin: 0 27px 0 5px; border-radius: 16px; background: #c5d1de; border: 1px solid #e4edf6; border-top-color: #94a3b3; display: flex; align-items: center; justify-content: space-between; padding: 0 5px; color: #8b8f94; }
.dim { color: #a6aeb7; }
.iis-addr { flex: 1; height: 29px; border: 1px solid #aebccb; border-right: 0; background: #f4f8fc; display: flex; align-items: center; gap: 14px; padding: 0 0 2px 7px; }
.iis-addr .ic { margin-right: -6px; }
.iis-menu { height: 31px; background: linear-gradient(#fcfcfc, #e3e3e3); display: flex; align-items: center; gap: 24px; padding: 0 0 2px 19px; }
.iis-body { flex: 1; min-height: 0; display: flex; gap: 7px; padding-left: 1px; }

.conn { width: 518px; margin-bottom: 2px; border: 1px solid #a5a5a5; display: flex; flex-direction: column; min-height: 0; background: #fff; }
.conn h2 { height: 30px; line-height: 31px; padding-left: 9px; background: #bcbabb; font-size: 14px; font-weight: 600; }
.conn-tools { height: 31px; display: flex; align-items: center; gap: 8px; padding-left: 2px; background: linear-gradient(#fcfcfc, #e2e1e2); border-bottom: 1px solid #6a6c94; }
.conn-tools button { gap: 2px; }
.conn-view { flex: 1; min-height: 0; display: flex; }
.tree { flex: 1; min-width: 0; overflow: hidden; padding-left: 1px; }
.tree li { height: 22px; display: flex; align-items: center; }
.tree li:nth-child(even) { height: 23px; }
.guide, .tog { flex: 0 0 24px; align-self: stretch; position: relative; }
.tog { display: flex; align-items: center; justify-content: center; padding-top: 3px; }
.open .tog { color: #444; }
.closed .tog { color: #a2a2a2; }
.tog::after { content: ""; position: absolute; right: -2px; top: 13px; width: 4px; border-top: 1px dotted #777; }
.closed .tog::before { content: ""; position: absolute; left: 12px; bottom: 0; height: 1px; border-left: 1px solid #999; }
.leaf::after { width: 12px; }
.leaf::before, .line::before { content: ""; position: absolute; left: 12px; top: 0; bottom: 0; border-left: 1px dotted #777; }
.leaf.first::before { top: 13px; }
.node { display: flex; align-items: center; gap: 7px; height: 22px; padding: 0 5px 0 2px; }
.node.selected { background: #d9d9d9; }
.sb { flex: 0 0 20px; background: #f0f0f0; display: flex; flex-direction: column; color: #555; }
.conn .sb { border-right: 1px solid #fff; }
.sb button { height: 21px; justify-content: center; }
.thumb { background: #cdcdcd; }
.tall { flex: 614 1 0; }
.short { flex: 351 1 0; }
.above { flex: 435 1 0; }
.mid { flex: 268 1 0; }
.below { flex: 315 1 0; }

.home { flex: 1; min-width: 0; display: flex; flex-direction: column; }
.home-main { flex: 1; min-height: 0; border: 1px solid #a5a5a5; border-right: 0; background: #fff; padding: 0 0 15px 16px; display: flex; flex-direction: column; }
.home-head { height: 64px; display: flex; align-items: center; gap: 21px; padding: 4px 0 0 1px; }
.big { width: 40px; height: 40px; }
h1 { font-size: 22px; line-height: 30px; color: #333; margin-bottom: 5px; }
.featbox { flex: 1; min-height: 0; border: 1px solid #e2e2e2; border-right: 0; display: flex; flex-direction: column; }
.filter { height: 32px; display: flex; align-items: center; background: linear-gradient(#f8f8f8, #e5e4e5); border-bottom: 2px solid #55568a; padding-left: 8px; overflow: hidden; }
.filter label { width: 43px; }
.combo { width: 151px; align-self: stretch; background: #fff; display: flex; margin-right: 4px; }
.combo input { flex: 1; min-width: 0; }
.combo button { width: 15px; justify-content: center; }
.go { gap: 5px; color: #999; width: 67px; }
.go .td { margin-left: 8px; }
.showall { gap: 4px; margin-right: 11px; }
.groupby { margin-left: 7px; }
.featlist { flex: 1; min-height: 0; overflow: hidden; background: linear-gradient(90deg, #f7f7f7 186px, #e3edf5 186px, #e3edf5 187px, #fff 187px); }
table { border-collapse: collapse; table-layout: fixed; width: 100%; }
th, td { padding: 0; text-align: left; font-weight: 400; overflow: hidden; text-overflow: clip; }
.c-name { width: 187px; }
.featlist th { height: 30px; padding-left: 7px; background: #fff; position: relative; border-right: 1px solid #e3edf5; }
.sort { position: absolute; top: -3px; left: 50%; width: 12px; height: 12px; color: #777; }
.featlist .sort { left: 48%; }
.featlist th + th, .featlist td + td { padding-left: 8px; }
.featlist td { height: 24px; line-height: 20px; }
.featlist tr:nth-child(4n) td { height: 23px; }
.feat { display: flex; align-items: center; gap: 2px; padding-left: 5px; }
.views { height: 35px; display: flex; align-items: center; gap: 2px; padding: 0 0 3px 7px; }
.views button { height: 25px; gap: 3px; padding: 0 7px 0 1px; border: 1px solid transparent; }
.views button + button { margin-left: -3px; }
.views .active { border: 2px solid #3d98e4; background: #fcfdff; }
.iis-status { height: 29px; line-height: 27px; border-top: 1px solid #fff; border-bottom: 1px solid #aaa; background: linear-gradient(90deg, #e3e1e1, #f2f2f2); padding-left: 6px; }

.exp { flex: 1136 1 0; min-width: 0; display: flex; flex-direction: column; background: #fff; overflow: hidden; padding-left: 1px; }
.exp-title { height: 37px; display: flex; align-items: center; gap: 12px; padding: 0 0 2px 13px; }
.custom { margin-left: -2px; }
.custom svg { width: 9px; height: 9px; }
.path { flex: 1; margin-left: -3px; }
.min { width: 13px; height: 2px; background: #222; margin-right: 27px; }
.ribbon { height: 30px; border-bottom: 1px solid #dadbdc; display: flex; color: #444; gap: 35px; }
.ribbon .file { width: 70px; justify-content: center; background: #0063b8; color: #fff; margin-right: -18px; }
.exp-nav { height: 53px; display: flex; align-items: center; padding-bottom: 3px; }
.exp-arrows { width: 133px; display: flex; align-items: center; justify-content: space-between; padding: 0 9px 0 16px; color: #777; }
.faint { color: #ccc; }
.exp-addr { flex: 1; min-width: 0; height: 38px; border: 1px solid #d9d9d9; display: flex; align-items: center; gap: 12px; padding-left: 5px; }
.exp-addr > .xf { margin-right: -2px; }
.drop { margin-left: auto; color: #777; }
.refresh { align-self: stretch; width: 38px; justify-content: center; border-left: 1px solid #d9d9d9; color: #777; }
.search { flex: 0 0 158px; min-width: 0; height: 38px; margin-left: 15px; border: 1px solid #d9d9d9; border-right: 0; padding-left: 11px; }
.search::placeholder { color: #777; opacity: 1; }
.exp-body { flex: 1; min-height: 0; display: flex; }
.navpane { flex: 0 0 328px; display: flex; }
.navpane ul { flex: 1; overflow: hidden; }
.navpane li { height: 30px; display: flex; align-items: center; gap: 8px; }
.sel { background: #cce8ff; }
.ntog { display: flex; justify-content: flex-end; padding-right: 5px; }
.top .ntog { width: 75px; }
.deep .ntog { width: 85px; }
.ntog.open { color: #444; }
.ntog.closed { color: #a2a2a2; }
.filepane { flex: 1; min-width: 0; overflow: hidden; margin-left: 3px; border-left: 1px solid #eee; }
.f-name { width: 341px; }
.f-date { width: 180px; }
.f-type { width: 150px; }
.f-size { width: 100px; }
.filepane th { height: 31px; padding-left: 8px; border-right: 1px solid #e3e3e3; color: #4c607a; position: relative; }
.filepane th:first-child { padding-left: 23px; }
.filepane th:last-child { border: 0; }
.filepane tbody::before { content: ""; display: block; height: 8px; }
.filepane td { height: 26px; padding-left: 8px; color: #6d6d6d; }
.filepane tr:nth-child(4n) td { height: 27px; }
.filepane td:first-child { color: #111; padding-left: 26px; }
.filepane td:nth-child(4) { text-align: right; padding-right: 10px; }
.fname { display: flex; align-items: center; gap: 7px; }
.exp-status { height: 29px; display: flex; align-items: center; gap: 12px; padding-left: 17px; color: #3c506e; }
.pale { background: #e5e5e5; }
</style>
